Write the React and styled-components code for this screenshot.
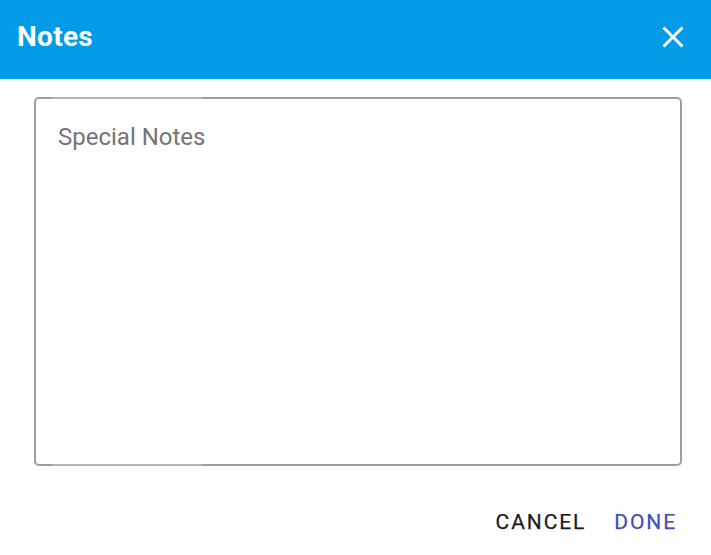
import React, {useState} from "react";
import styled, {createGlobalStyle} from "styled-components";

const GlobalStyle = createGlobalStyle`
    html, body {
        margin: 0;
        padding: 0;
        background: #ffffff;
        font-family: Roboto, "Liberation Sans", sans-serif;
    }
`;

const Dialog = styled.div`
    width: 711px;
    height: 555px;
    display: flex;
    flex-direction: column;
    background: #ffffff;
`;

const Header = styled.div`
    height: 79px;
    background-color: #039be5;
    display: flex;
    align-items: center;
    justify-content: space-between;
    padding: 0 20px 0 17px;
    box-sizing: border-box;
`;

const Title = styled.h2`
    margin: 0;
    margin-top: -6px;
    color: #ffffff;
    font-size: 28px;
    font-weight: 700;
    letter-spacing: 0.3px;
`;

const CloseButton = styled.button`
    border: none;
    background: none;
    padding: 0;
    width: 36px;
    height: 36px;
    margin-top: -6px;
    cursor: pointer;
    display: flex;
    svg {
        width: 36px;
        height: 36px;
        fill: #ffffff;
    }
`;

const Body = styled.div`
    flex: 1;
    display: flex;
    flex-direction: column;
    padding: 18px 29px 0 34px;
`;

const NotesField = styled.div`
    position: relative;
    height: 369px;
    border: 2px solid #9e9e9e;
    border-radius: 5px;
    box-sizing: border-box;

    &::before, &::after {
        content: "";
        position: absolute;
        left: 16px;
        width: 150px;
        height: 2px;
        background: #b4b4b4;
    }
    &::before { top: -2px; }
    &::after { bottom: -2px; }
`;

const NotesInput = styled.textarea`
    width: 100%;
    height: 100%;
    box-sizing: border-box;
    border: none;
    outline: none;
    resize: none;
    background: transparent;
    padding: 24px 22px;
    font-family: Roboto, "Liberation Sans", sans-serif;
    font-size: 24px;
    color: #212121;

    &::placeholder {
        color: #757575;
        opacity: 1;
    }
`;

const Actions = styled.div`
    display: flex;
    justify-content: flex-end;
    align-items: center;
    gap: 24px;
    padding: 40px 3px 0 0;
`;

const ActionButton = styled.button`
    border: none;
    background: none;
    padding: 4px 2px;
    font-family: Roboto, "Liberation Sans", sans-serif;
    font-size: 21px;
    font-weight: 400;
    letter-spacing: 1.9px;
    color: ${props => props.primary ? "#3f51b5" : "#1c1c1c"};
    -webkit-text-stroke: 0.25px ${props => props.primary ? "#3f51b5" : "#1c1c1c"};
    cursor: pointer;
`;

const App = () => {
    const [notes, setNotes] = useState("");

    return (
        <Dialog>
            <GlobalStyle/>
            <Header>
                <Title>Notes</Title>
                <CloseButton aria-label="close">
                    <svg viewBox="0 0 24 24">
                        <path d="M19 6.41 17.59 5 12 10.59 6.41 5 5 6.41 10.59 12 5 17.59 6.41 19 12 13.41 17.59 19 19 17.59 13.41 12z"/>
                    </svg>
                </CloseButton>
            </Header>
            <Body>
                <NotesField>
                    <NotesInput
                        placeholder="Special Notes"
                        value={notes}
                        onChange={e => setNotes(e.target.value)}/>
                </NotesField>
                <Actions>
                    <ActionButton>CANCEL</ActionButton>
                    <ActionButton primary>DONE</ActionButton>
                </Actions>
            </Body>
        </Dialog>
    )
};

export default App
